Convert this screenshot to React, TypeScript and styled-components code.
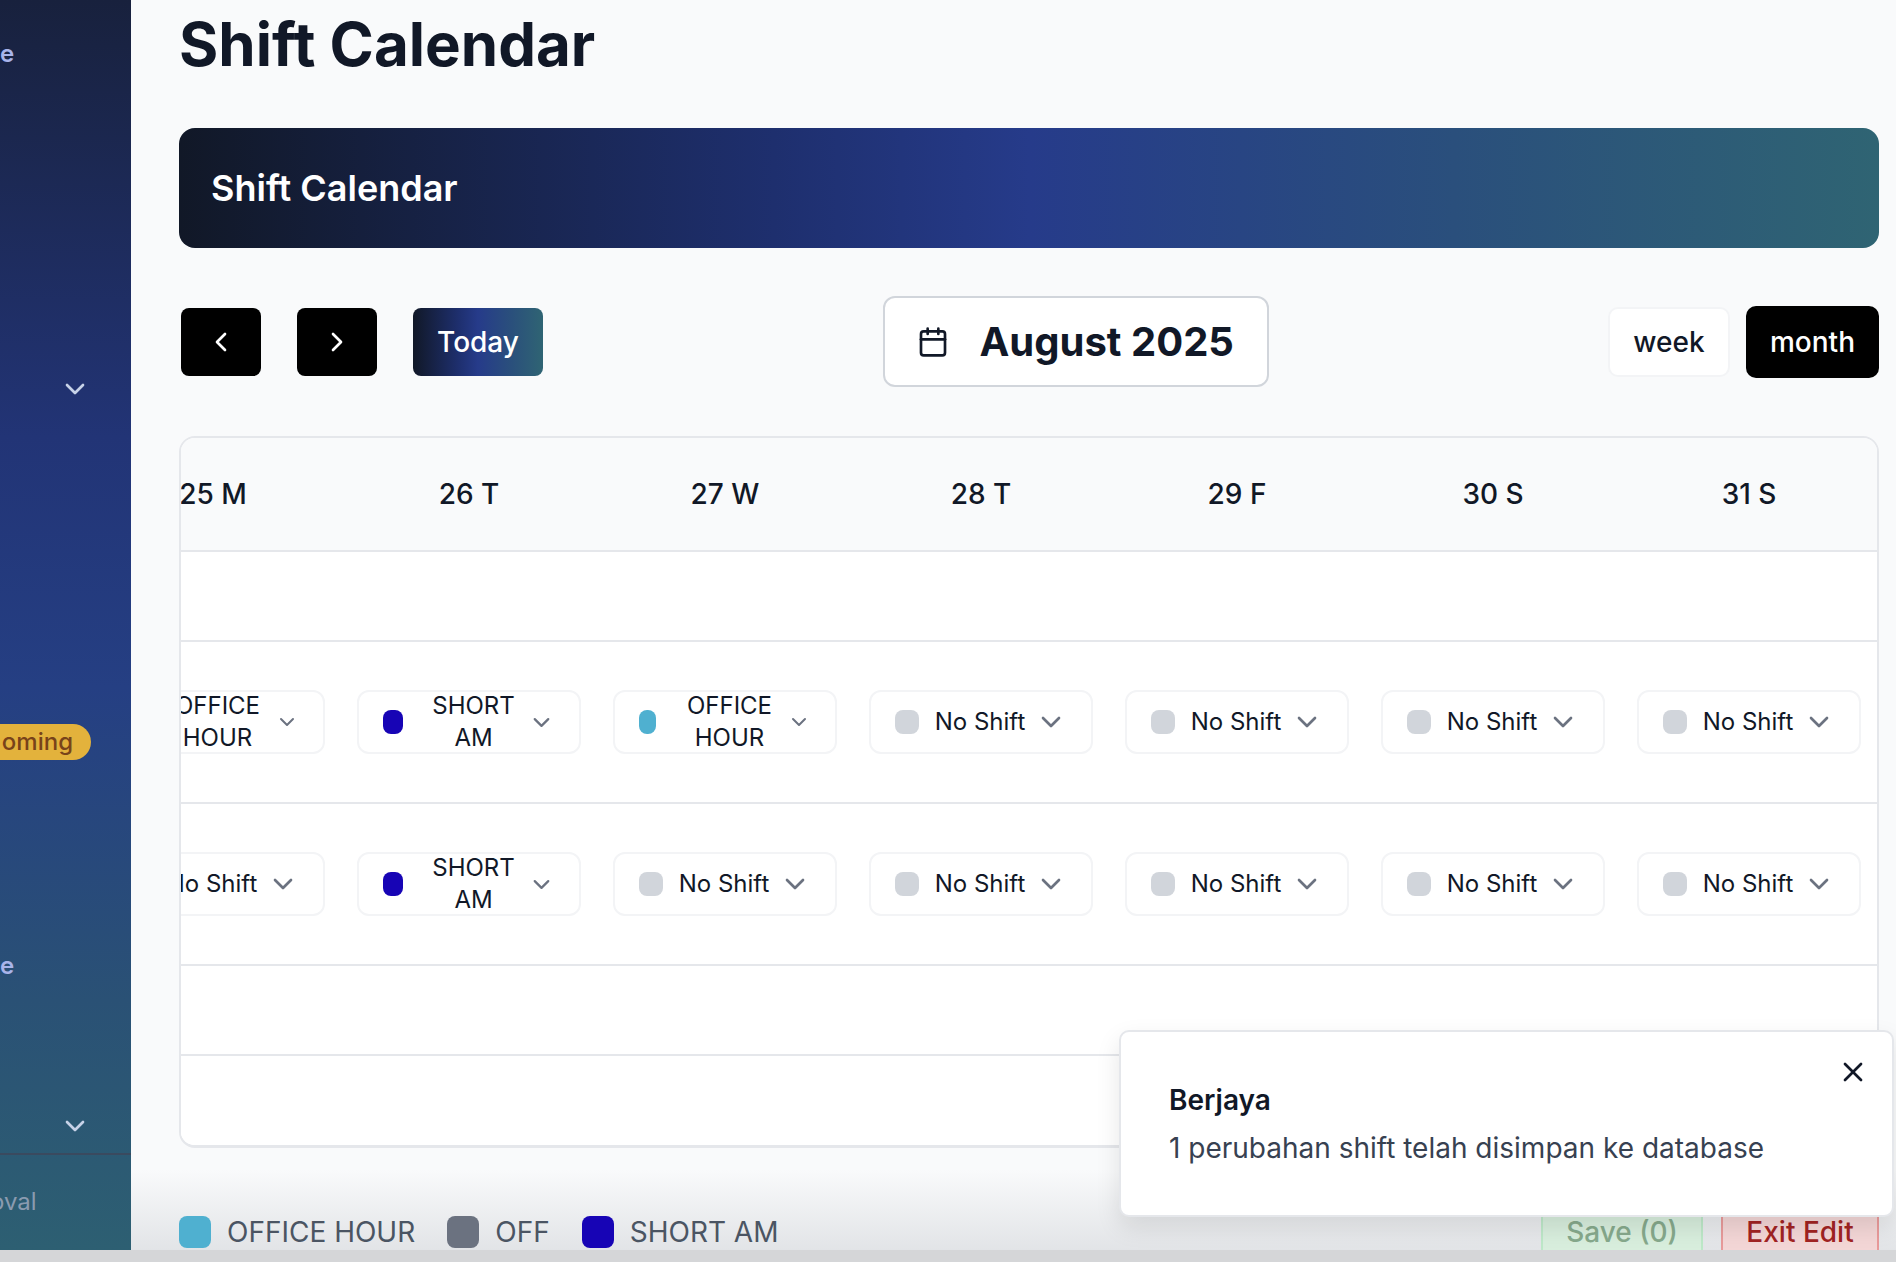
import React from 'react';
import styled, { createGlobalStyle } from 'styled-components';
import { Calendar, ChevronDown, ChevronLeft, ChevronRight, X } from 'lucide-react';

const GRADIENT_STOPS = '#111827 0%, #1e2f6e 35%, #263b8a 50%, #2a4f7c 75%, #2f6473 100%';

const GlobalStyle = createGlobalStyle`
  html, body {
    margin: 0;
    height: 100%;
    overflow: hidden;
    background: #f9fafb;
    font-family: Inter, "Noto Sans", sans-serif;
    color: #111827;
  }
  #root { height: 100%; }
  * { box-sizing: border-box; }
`;

const Page = styled.div`
  display: flex;
  flex-direction: column;
  height: 1262px;
  background: #d5d6d8;
`;

const Screen = styled.div`
  position: relative;
  flex: 1;
  min-height: 0;
  display: flex;
  overflow: hidden;
`;

const Sidebar = styled.aside`
  flex: 0 0 131px;
  display: flex;
  flex-direction: column;
  padding-top: 36px;
  background: linear-gradient(180deg, #18213d 0%, #223476 35%, #253f83 55%, #2a5175 80%, #2d5f72 100%);
  overflow: hidden;
`;

const SideLabel = styled.div<{ $top?: number; $muted?: boolean }>`
  height: 36px;
  margin-top: ${({ $top }) => $top ?? 0}px;
  margin-left: ${({ $muted }) => ($muted ? '-10px' : '0')};
  font-size: 24px;
  line-height: 36px;
  font-weight: ${({ $muted }) => ($muted ? 400 : 600)};
  color: ${({ $muted }) => ($muted ? '#8a9bb0' : '#a9b4ea')};
`;

const SideChevron = styled(ChevronDown)<{ $top: number }>`
  flex: none;
  margin: ${({ $top }) => $top}px 0 0 59px;
  color: #c7d2e8;
`;

const Badge = styled.div`
  flex: none;
  width: 91px;
  height: 36px;
  margin-top: 319px;
  border-radius: 0 18px 18px 0;
  background: #e3b23c;
  color: #78431a;
  font-size: 24px;
  font-weight: 500;
  line-height: 36px;
  text-align: right;
  padding-right: 18px;
  overflow: hidden;
`;

const SideDivider = styled.div`
  flex: none;
  height: 2px;
  margin-top: 11px;
  background: #3a4a5f;
`;

const Main = styled.main`
  flex: 1;
  min-width: 0;
  padding: 14px 17px 0 48px;
  background: linear-gradient(180deg, #f9fafb calc(100% - 80px), #e2e4e7 100%);
`;

const PageTitle = styled.h1`
  margin: 0;
  font-size: 60px;
  line-height: 60px;
  font-weight: 700;
  color: #111827;
`;

const Banner = styled.div`
  height: 120px;
  margin-top: 54px;
  padding: 0 32px;
  display: flex;
  align-items: center;
  border-radius: 16px;
  background: linear-gradient(90deg, ${GRADIENT_STOPS});
  color: #fff;
  font-size: 36px;
  font-weight: 600;
`;

const Toolbar = styled.div`
  height: 91px;
  margin-top: 48px;
  display: flex;
  justify-content: space-between;
  align-items: center;
`;

const NavGroup = styled.div`
  display: flex;
  gap: 36px;
  padding-left: 2px;
`;

const NavButton = styled.button<{ $gradient?: boolean }>`
  height: 68px;
  width: ${({ $gradient }) => ($gradient ? '130px' : '80px')};
  display: flex;
  align-items: center;
  justify-content: center;
  border: 0;
  border-radius: 8px;
  background: ${({ $gradient }) => ($gradient ? `linear-gradient(90deg, ${GRADIENT_STOPS})` : '#000')};
  color: #fff;
  font-family: inherit;
  font-size: 28px;
  font-weight: 500;
`;

const DateBox = styled.div`
  width: 386px;
  height: 91px;
  display: flex;
  align-items: center;
  gap: 31px;
  padding-left: 32px;
  border: 2px solid #d1d5db;
  border-radius: 12px;
  background: #fff;
  font-size: 40px;
  font-weight: 700;
  color: #111827;
`;

const ViewGroup = styled.div`
  display: flex;
  align-items: center;
  gap: 16px;
`;

const ViewButton = styled.button<{ $active?: boolean }>`
  width: ${({ $active }) => ($active ? '133px' : '122px')};
  height: ${({ $active }) => ($active ? '72px' : '70px')};
  padding: 0;
  border: ${({ $active }) => ($active ? '0' : '2px solid #f3f4f6')};
  border-radius: 10px;
  background: ${({ $active }) => ($active ? '#000' : '#fff')};
  color: ${({ $active }) => ($active ? '#fff' : '#111827')};
  font-family: inherit;
  font-size: 28px;
  font-weight: 500;
`;

const TableCard = styled.div`
  margin-top: 49px;
  height: 712px;
  border: 2px solid #e5e7eb;
  border-bottom-width: 3px;
  border-radius: 16px;
  background: #fff;
  overflow: hidden;
`;

const Track = styled.div`
  width: 1792px;
  margin-left: -96px;
`;

const Row = styled.div<{ $head?: boolean; $height: number }>`
  height: ${({ $height }) => $height}px;
  display: grid;
  grid-template-columns: repeat(7, 256px);
  align-items: center;
  background: ${({ $head }) => ($head ? '#f9fafb' : '#fff')};
  border-bottom: 2px solid #e5e7eb;

  &:last-child {
    border-bottom: 0;
  }
`;

const DayHead = styled.div`
  text-align: center;
  font-size: 28px;
  font-weight: 500;
  color: #111827;
`;

const Cell = styled.div`
  padding: 0 16px;
`;

const ShiftSelect = styled.div`
  height: 64px;
  display: flex;
  align-items: center;
  padding: 0 24px;
  border: 2px solid #f3f4f6;
  border-radius: 12px;
  background: #fff;
`;

const ShiftDot = styled.span<{ $color: string; $width: number }>`
  flex: 0 0 ${({ $width }) => $width}px;
  height: 24px;
  border-radius: 8px;
  background: ${({ $color }) => $color};
`;

const ShiftLabel = styled.span<{ $single: boolean }>`
  flex: 1;
  min-width: 0;
  padding: ${({ $single }) => ($single ? '0 9px 0 15px' : '0 2px 0 18px')};
  text-align: center;
  white-space: ${({ $single }) => ($single ? 'nowrap' : 'normal')};
  font-size: 24px;
  line-height: 32px;
  color: #111827;
`;

const ShiftChevron = styled(ChevronDown)`
  flex: none;
  color: #6b7280;
`;

const Footer = styled.div`
  height: 64px;
  margin-top: 52px;
  display: flex;
  align-items: center;
  justify-content: space-between;
`;

const Legend = styled.div`
  display: flex;
  gap: 32px;
`;

const LegendItem = styled.div`
  display: flex;
  align-items: center;
  gap: 16px;
  font-size: 28px;
  color: #4b5563;
`;

const LegendSwatch = styled.span<{ $color: string }>`
  width: 32px;
  height: 32px;
  border-radius: 8px;
  background: ${({ $color }) => $color};
`;

const FooterActions = styled.div`
  display: flex;
  gap: 18px;
`;

const ActionButton = styled.button<{ $tone: 'save' | 'exit' }>`
  height: 64px;
  width: ${({ $tone }) => ($tone === 'save' ? '162px' : '158px')};
  border: 2px solid ${({ $tone }) => ($tone === 'save' ? '#bde8c8' : '#e89a9a')};
  border-radius: 8px;
  background: ${({ $tone }) => ($tone === 'save' ? '#d8eedd' : '#f3d6d6')};
  color: ${({ $tone }) => ($tone === 'save' ? '#86a98c' : '#a12323')};
  font-family: inherit;
  font-size: 28px;
  font-weight: 500;
`;

const BottomStrip = styled.div`
  flex: 0 0 12px;
  background: #d5d6d8;
`;

const Toast = styled.div`
  position: absolute;
  left: 1119px;
  top: 1030px;
  width: 775px;
  height: 187px;
  padding: 50px 48px 0 48px;
  border: 2px solid #e5e7eb;
  border-radius: 10px;
  background: #fff;
  box-shadow: 0 10px 24px rgba(0, 0, 0, 0.1);
`;

const ToastTitle = styled.div`
  font-size: 28px;
  line-height: 36px;
  font-weight: 600;
  color: #111827;
`;

const ToastText = styled.div`
  margin-top: 12px;
  font-size: 28px;
  line-height: 36px;
  color: #374151;
`;

const ToastClose = styled(X)`
  position: absolute;
  top: 24px;
  right: 23px;
  color: #111827;
`;

type Shift = { label: string; color: string; dot: number; chevron: number; single: boolean };

const NO_SHIFT: Shift = { label: 'No Shift', color: '#d1d5db', dot: 24, chevron: 32, single: true };
const OFFICE: Shift = { label: 'OFFICE HOUR', color: '#4fb0d0', dot: 17, chevron: 24, single: false };
const SHORT: Shift = { label: 'SHORT AM', color: '#1704b5', dot: 20, chevron: 27, single: false };

const DAYS = ['25 M', '26 T', '27 W', '28 T', '29 F', '30 S', '31 S'];
const ROW_ONE = [OFFICE, SHORT, OFFICE, NO_SHIFT, NO_SHIFT, NO_SHIFT, NO_SHIFT];
const ROW_TWO = [NO_SHIFT, SHORT, NO_SHIFT, NO_SHIFT, NO_SHIFT, NO_SHIFT, NO_SHIFT];

const ShiftRow = ({ shifts }: { shifts: Shift[] }) => (
  <Row $height={162}>
    {shifts.map((shift, i) => (
      <Cell key={i}>
        <ShiftSelect>
          <ShiftDot $color={shift.color} $width={shift.dot} />
          <ShiftLabel $single={shift.single}>{shift.label}</ShiftLabel>
          <ShiftChevron size={shift.chevron} />
        </ShiftSelect>
      </Cell>
    ))}
  </Row>
);

const App = () => {
  return (
    <Page>
      <GlobalStyle />
      <Screen>
        <Sidebar>
          <SideLabel>e</SideLabel>
          <SideChevron $top={301} size={32} />
          <Badge>oming</Badge>
          <SideLabel $top={188}>e</SideLabel>
          <SideChevron $top={126} size={32} />
          <SideDivider />
          <SideLabel $top={29} $muted>
            oval
          </SideLabel>
        </Sidebar>
        <Main>
          <PageTitle>Shift Calendar</PageTitle>
          <Banner>Shift Calendar</Banner>
          <Toolbar>
            <NavGroup>
              <NavButton aria-label="Previous">
                <ChevronLeft size={32} />
              </NavButton>
              <NavButton aria-label="Next">
                <ChevronRight size={32} />
              </NavButton>
              <NavButton $gradient>Today</NavButton>
            </NavGroup>
            <DateBox>
              <Calendar size={32} />
              August 2025
            </DateBox>
            <ViewGroup>
              <ViewButton>week</ViewButton>
              <ViewButton $active>month</ViewButton>
            </ViewGroup>
          </Toolbar>
          <TableCard>
            <Track>
              <Row $head $height={114}>
                {DAYS.map((day) => (
                  <DayHead key={day}>{day}</DayHead>
                ))}
              </Row>
              <Row $height={90} />
              <ShiftRow shifts={ROW_ONE} />
              <ShiftRow shifts={ROW_TWO} />
              <Row $height={90} />
              <Row $height={90} />
            </Track>
          </TableCard>
          <Footer>
            <Legend>
              <LegendItem>
                <LegendSwatch $color="#4fb0d0" />
                OFFICE HOUR
              </LegendItem>
              <LegendItem>
                <LegendSwatch $color="#6b7280" />
                OFF
              </LegendItem>
              <LegendItem>
                <LegendSwatch $color="#1704b5" />
                SHORT AM
              </LegendItem>
            </Legend>
            <FooterActions>
              <ActionButton $tone="save">Save (0)</ActionButton>
              <ActionButton $tone="exit">Exit Edit</ActionButton>
            </FooterActions>
          </Footer>
        </Main>
        <Toast>
          <ToastTitle>Berjaya</ToastTitle>
          <ToastText>1 perubahan shift telah disimpan ke database</ToastText>
          <ToastClose size={32} />
        </Toast>
      </Screen>
      <BottomStrip />
    </Page>
  );
};

export default App;
